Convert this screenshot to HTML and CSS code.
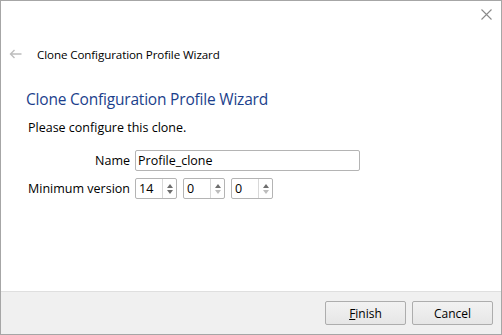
FILE: index.html
```html
<!DOCTYPE html>
<html>
<head>
<meta charset="utf-8">
<link rel="stylesheet" href="styles.css">
</head>
<body>
<div class="window">
  <div class="main">
    <div class="titlebar">
      <svg class="close" width="11" height="11" viewBox="0 0 11 11"><path d="M0.5 0.5L10.5 10.5M10.5 0.5L0.5 10.5" stroke="#8a8a8a" stroke-width="1.1" fill="none"/></svg>
    </div>
    <div class="navrow">
      <svg class="back" width="13" height="10" viewBox="0 0 13 10"><path d="M12.5 5H1.5M5.5 1L1.5 5L5.5 9" stroke="#bdbdbd" stroke-width="1.4" fill="none"/></svg>
      <span class="navtitle">Clone Configuration Profile Wizard</span>
    </div>
    <h1 class="heading">Clone Configuration Profile Wizard</h1>
    <p class="intro">Please configure this clone.</p>
    <div class="form">
      <label class="lbl">Name</label>
      <div class="field"><input class="text" type="text" value="Profile_clone"></div>
      <label class="lbl">Minimum version</label>
      <div class="spins">
        <div class="spin"><span class="val">14</span><span class="arrows"><svg width="8" height="14" viewBox="0 0 8 14"><path d="M4 2L7 6H1Z" fill="#6e6e6e"/><path d="M4 12L7 8H1Z" fill="#6e6e6e"/></svg></span></div>
        <div class="spin"><span class="val">0</span><span class="arrows"><svg width="8" height="14" viewBox="0 0 8 14"><path d="M4 2L7 6H1Z" fill="#6e6e6e"/><path d="M4 12L7 8H1Z" fill="#bdbdbd"/></svg></span></div>
        <div class="spin"><span class="val">0</span><span class="arrows"><svg width="8" height="14" viewBox="0 0 8 14"><path d="M4 2L7 6H1Z" fill="#6e6e6e"/><path d="M4 12L7 8H1Z" fill="#bdbdbd"/></svg></span></div>
      </div>
    </div>
  </div>
  <div class="footer">
    <button class="btn"><u>F</u>inish</button>
    <button class="btn">Cancel</button>
  </div>
</div>
</body>
</html>
```
FILE: styles.css
```css
html, body {
  margin: 0;
  padding: 0;
  background: #ffffff;
}
body {
  font-family: "Open Sans", "Noto Sans", sans-serif;
  font-size: 12px;
  color: #000;
}
.window {
  width: 502px;
  height: 335px;
  box-sizing: border-box;
  border: 1px solid #a6a6a6;
  display: flex;
  flex-direction: column;
  background: #fff;
}
.main {
  flex: 1;
  display: flex;
  flex-direction: column;
}
.titlebar {
  height: 41px;
  display: flex;
  justify-content: flex-end;
  align-items: flex-start;
}
.close {
  margin: 8px 9px 0 0;
}
.navrow {
  height: 24px;
  display: flex;
  align-items: center;
  padding-left: 8px;
}
.back {
  margin-right: 15px;
}
.navtitle {
  font-size: 11.6px;
  letter-spacing: -0.1px;
}
.heading {
  margin: 23px 0 0 25px;
  font-weight: normal;
  font-size: 15.5px;
  line-height: 20px;
  color: #1c3f8c;
  letter-spacing: -0.2px;
}
.intro {
  margin: 11px 0 0 27px;
  font-size: 12.5px;
  line-height: 16px;
}
.form {
  display: grid;
  grid-template-columns: 107px auto;
  column-gap: 5px;
  row-gap: 7px;
  margin: 14px 0 0 22px;
  font-size: 12.5px;
  align-items: center;
}
.lbl {
  text-align: right;
}
.text {
  width: 225px;
  height: 21px;
  box-sizing: border-box;
  border: 1px solid #b4b4b4;
  border-radius: 2px;
  font: inherit;
  padding: 0 2px;
  margin: 0;
  outline: none;
}
.spins {
  display: flex;
  gap: 6px;
}
.spin {
  width: 42px;
  height: 21px;
  box-sizing: border-box;
  border: 1px solid #b4b4b4;
  border-radius: 2px;
  display: flex;
  align-items: center;
  justify-content: space-between;
}
.val {
  padding-left: 3px;
}
.arrows {
  width: 13px;
  height: 19px;
  border-left: 1px solid #d8d8d8;
  display: flex;
  align-items: center;
  justify-content: center;
}
.footer {
  height: 43px;
  box-sizing: border-box;
  background: #f0f0f0;
  border-top: 1px solid #dfdfdf;
  display: flex;
  justify-content: flex-end;
  align-items: flex-start;
  gap: 6px;
  padding: 9px 8px 0 0;
}
.btn {
  width: 81px;
  height: 24px;
  box-sizing: border-box;
  border: 1px solid #adadad;
  border-radius: 2px;
  background: linear-gradient(#f2f2f2, #e6e6e6);
  font: inherit;
  font-size: 12px;
  color: #000;
  padding: 0;
  margin: 0;
}
```
